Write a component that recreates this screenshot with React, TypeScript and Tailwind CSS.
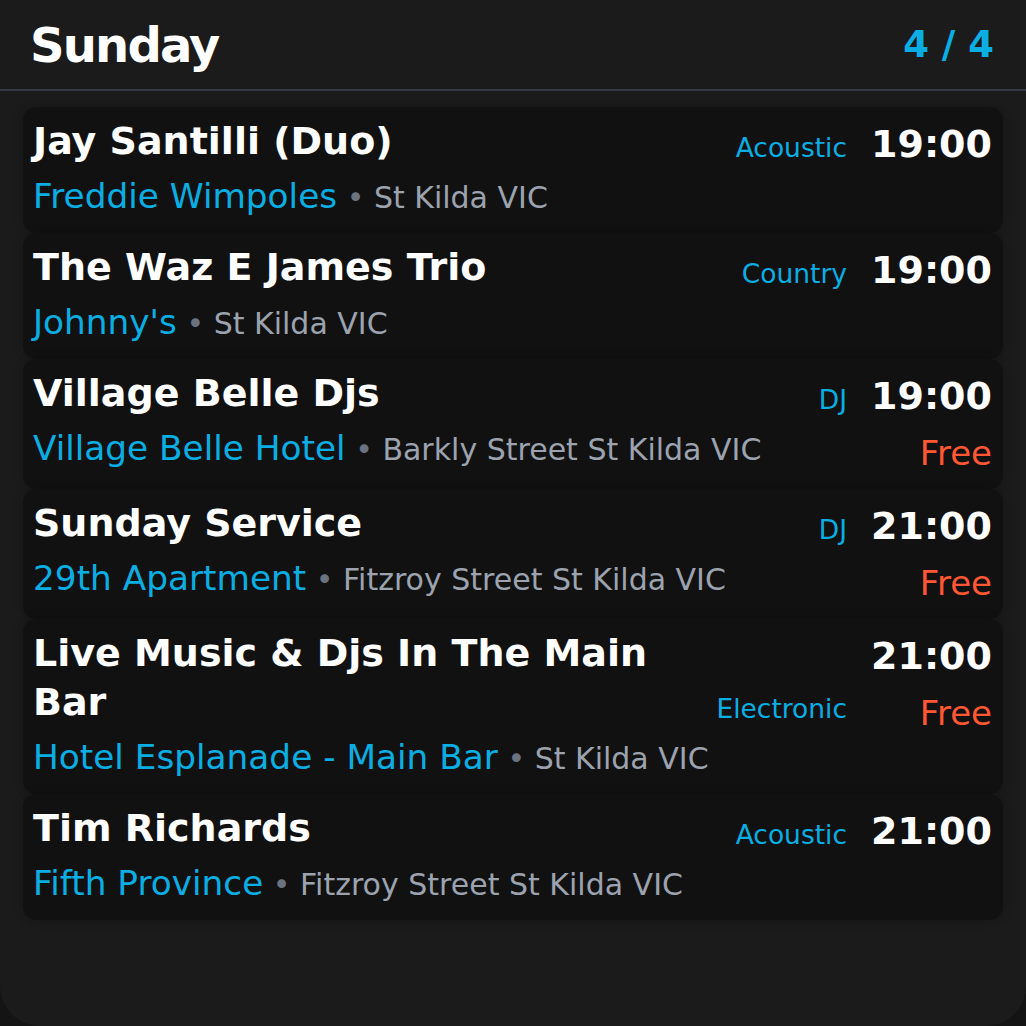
import React from 'react';

interface Gig {
    title: string;
    venue: string;
    address: string;
    genre?: string;
    time: string;
    free?: boolean;
}

const gigs: Gig[] = [
    { title: 'Jay Santilli (Duo)', venue: 'Freddie Wimpoles', address: 'St Kilda VIC', genre: 'Acoustic', time: '19:00' },
    { title: 'The Waz E James Trio', venue: "Johnny's", address: 'St Kilda VIC', genre: 'Country', time: '19:00' },
    { title: 'Village Belle Djs', venue: 'Village Belle Hotel', address: 'Barkly Street St Kilda VIC', genre: 'DJ', time: '19:00', free: true },
    { title: 'Sunday Service', venue: '29th Apartment', address: 'Fitzroy Street St Kilda VIC', genre: 'DJ', time: '21:00', free: true },
    { title: 'Live Music & Djs In The Main Bar', venue: 'Hotel Esplanade - Main Bar', address: 'St Kilda VIC', genre: 'Electronic', time: '21:00', free: true },
    { title: 'Tim Richards', venue: 'Fifth Province', address: 'Fitzroy Street St Kilda VIC', genre: 'Acoustic', time: '21:00' },
];

const GigCard: React.FC<{ gig: Gig }> = ({ gig }) => {
    return (
        <div className="flex gap-6 rounded-[14px] bg-[#111111] py-[10px] pl-[10px] pr-[11px] shadow-[0_0_10px_rgba(0,0,0,0.25)]">
            <div className="flex min-w-0 flex-1 flex-col">
                <div className="flex items-end gap-4">
                    <div className="flex-1 text-[38px] font-bold leading-[49px] text-white">{gig.title}</div>
                    {gig.genre && (
                        <div className="text-[26.5px] leading-[37px] text-[#0aaee2]">{gig.genre}</div>
                    )}
                </div>
                <div className="h-[57px] whitespace-nowrap text-[34.3px] leading-[60px]">
                    <span className="text-[#0aaee2]">{gig.venue}</span>
                    <span className="text-[30px] text-[#6b7280]"> • </span>
                    <span className="text-[30px] text-[#9ca3af]">{gig.address}</span>
                </div>
            </div>
            <div className="flex flex-col items-end">
                <div className="text-[38px] font-bold leading-[55px] text-white">{gig.time}</div>
                {gig.free && (
                    <div className="translate-y-[2px] text-[34px] leading-[55px] text-[#ff5733]">Free</div>
                )}
            </div>
        </div>
    );
};

export default function App() {
    return (
        <div className="min-h-[1026px] bg-[#141414] font-['DejaVu_Sans',sans-serif]">
            <div className="flex h-[1026px] flex-col rounded-b-[40px] bg-[#1b1b1b]">
                <div className="flex h-[91px] items-center justify-between border-b-2 border-[#343944] pl-[30px] pr-[32px]">
                    <span className="text-[48px] font-bold tracking-[-0.038em] text-white">Sunday</span>
                    <span className="text-[37px] font-bold text-[#0aaee2]">4 / 4</span>
                </div>
                <div className="flex flex-col px-[23px] pt-[16px]">
                    {gigs.map((gig, i) => (
                        <GigCard key={i} gig={gig} />
                    ))}
                </div>
            </div>
        </div>
    );
}
